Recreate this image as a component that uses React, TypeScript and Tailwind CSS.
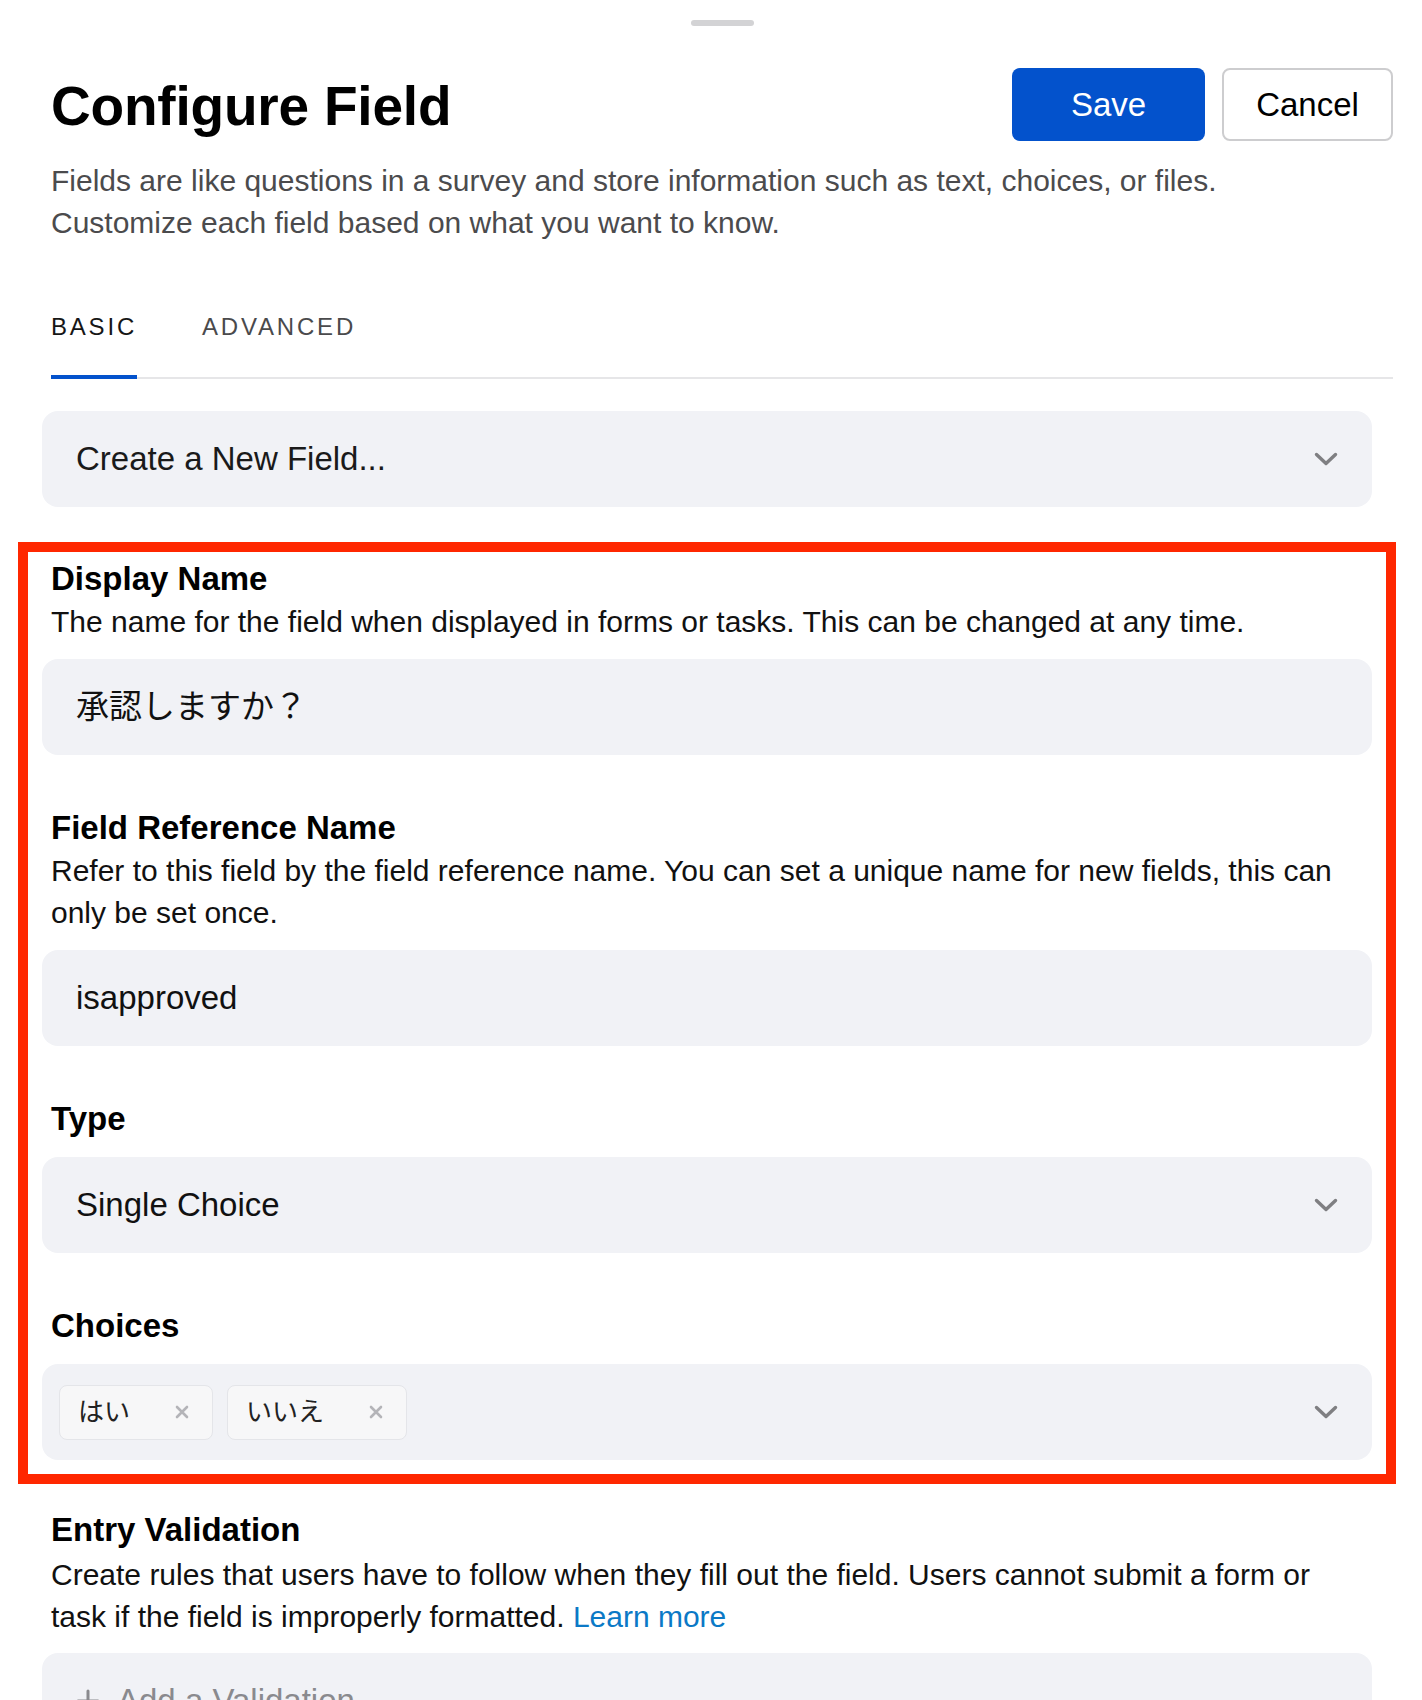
import { ReactNode } from 'react'

const font = "font-['Liberation_Sans','Noto_Sans_CJK_JP',sans-serif]"

function Chevron() {
  return (
    <svg width="24" height="14" viewBox="0 0 24 14" fill="none" aria-hidden="true">
      <path d="M2.5 2.5 L12 11.5 L21.5 2.5" stroke="#7f7f82" strokeWidth="3.4" strokeLinecap="round" strokeLinejoin="round" />
    </svg>
  )
}

function SmallX() {
  return (
    <svg width="14" height="14" viewBox="0 0 14 14" fill="none" aria-hidden="true">
      <path d="M2 2 L12 12 M12 2 L2 12" stroke="#b4b4b8" strokeWidth="2.6" strokeLinecap="round" />
    </svg>
  )
}

function Label({ children, className = '' }: { children: ReactNode; className?: string }) {
  return <div className={`pl-[9px] text-[33px] font-bold leading-[40px] text-black ${className}`}>{children}</div>
}

function Help({ children, className = '' }: { children: ReactNode; className?: string }) {
  return <p className={`pl-[9px] text-[30px] leading-[42px] text-[#111] ${className}`}>{children}</p>
}

function Box({ children, chevron = false, className = '' }: { children?: ReactNode; chevron?: boolean; className?: string }) {
  return (
    <div className={`flex h-[96px] w-full items-center rounded-[16px] bg-[#f1f2f6] pr-[34px] ${className}`}>
      <div className="flex min-w-0 flex-1 items-center">{children}</div>
      {chevron && <Chevron />}
    </div>
  )
}

function Chip({ label }: { label: string }) {
  return (
    <div className="flex h-[55px] items-center rounded-[8px] border-[1.5px] border-[#e4e5e9] bg-[#f7f7f8] pl-[18px] pr-[23px]">
      <span className="text-[26px] leading-none text-[#222]">{label}</span>
      <span className="ml-[45px] flex items-center">
        <SmallX />
      </span>
    </div>
  )
}

export default function App() {
  return (
    <div className={`min-h-screen bg-white pb-[80px] pl-[42px] pr-[29px] ${font}`}>
      {/* grabber */}
      <div className="flex justify-center pl-[9px] pt-[20px]">
        <div className="h-[6px] w-[63px] rounded-full bg-[#d3d3d5]" />
      </div>

      {/* header */}
      <div className="mt-[42px] flex items-start justify-between pl-[9px]">
        <h1 className="mt-[8px] text-[55px] font-bold leading-[60px] tracking-[-0.2px] text-black">Configure Field</h1>
        <div className="flex gap-[17px]">
          <button className="h-[73px] w-[193px] rounded-[8px] bg-[#0352cc] text-[33px] text-white">Save</button>
          <button className="h-[73px] w-[171px] rounded-[8px] border-2 border-[#cdcdcf] bg-white text-[33px] text-black">
            Cancel
          </button>
        </div>
      </div>
      <p className="mt-[19px] pl-[9px] text-[30px] leading-[42px] text-[#4b4b4d]">
        Fields are like questions in a survey and store information such as text, choices, or files.
        <br />
        Customize each field based on what you want to know.
      </p>

      {/* tabs */}
      <div className="ml-[9px] mt-[68px] flex h-[67px] items-start gap-[65px] border-b-2 border-[#e6e6e8]">
        <div className="-mb-[2px] border-b-4 border-[#0352cc] pb-[33px] text-[24px] leading-[30px] tracking-[2.8px] text-[#161616]">
          BASIC
        </div>
        <div className="text-[24px] leading-[30px] tracking-[2.8px] text-[#4a4a4c]">ADVANCED</div>
      </div>

      <div className="w-[1330px]">
        <Box chevron className="mt-[32px]">
          <span className="pl-[34px] text-[33px] text-[#1a1a1a]">Create a New Field...</span>
        </Box>

        {/* highlighted section */}
        <div className="-ml-[24px] mt-[35px] w-[1378px] border-[10px] border-[#ff2700] px-[14px] pb-[14px] pt-[7px]">
          <Label>Display Name</Label>
          <Help className="mt-[2px]">The name for the field when displayed in forms or tasks. This can be changed at any time.</Help>
          <Box className="mt-[16px]">
            <span className="pl-[34px] text-[33px] text-[#111]">承認しますか？</span>
          </Box>

          <Label className="mt-[53px]">Field Reference Name</Label>
          <Help className="mt-[2px]">
            Refer to this field by the field reference name. You can set a unique name for new fields, this can
            <br />
            only be set once.
          </Help>
          <Box className="mt-[16px]">
            <span className="pl-[34px] text-[33px] text-[#111]">isapproved</span>
          </Box>

          <Label className="mt-[53px]">Type</Label>
          <Box chevron className="mt-[18px]">
            <span className="pl-[34px] text-[33px] text-[#111]">Single Choice</span>
          </Box>

          <Label className="mt-[53px]">Choices</Label>
          <Box chevron className="mt-[18px]">
            <div className="flex gap-[14px] pl-[17px]">
              <Chip label="はい" />
              <Chip label="いいえ" />
            </div>
          </Box>
        </div>

        <Label className="mt-[26px]">Entry Validation</Label>
        <Help className="mt-[4px]">
          Create rules that users have to follow when they fill out the field. Users cannot submit a form or
          <br />
          task if the field is improperly formatted. <span className="text-[#0b79c6]">Learn more</span>
        </Help>
        <Box className="mt-[15px]">
          <div className="flex items-center pl-[34px] text-[#8a8a8e]">
            <svg width="24" height="24" viewBox="0 0 24 24" fill="none" aria-hidden="true">
              <path d="M12 2 V22 M2 12 H22" stroke="#8a8a8e" strokeWidth="3" strokeLinecap="round" />
            </svg>
            <span className="ml-[17px] text-[33px]">Add a Validation</span>
          </div>
        </Box>
      </div>
    </div>
  )
}
